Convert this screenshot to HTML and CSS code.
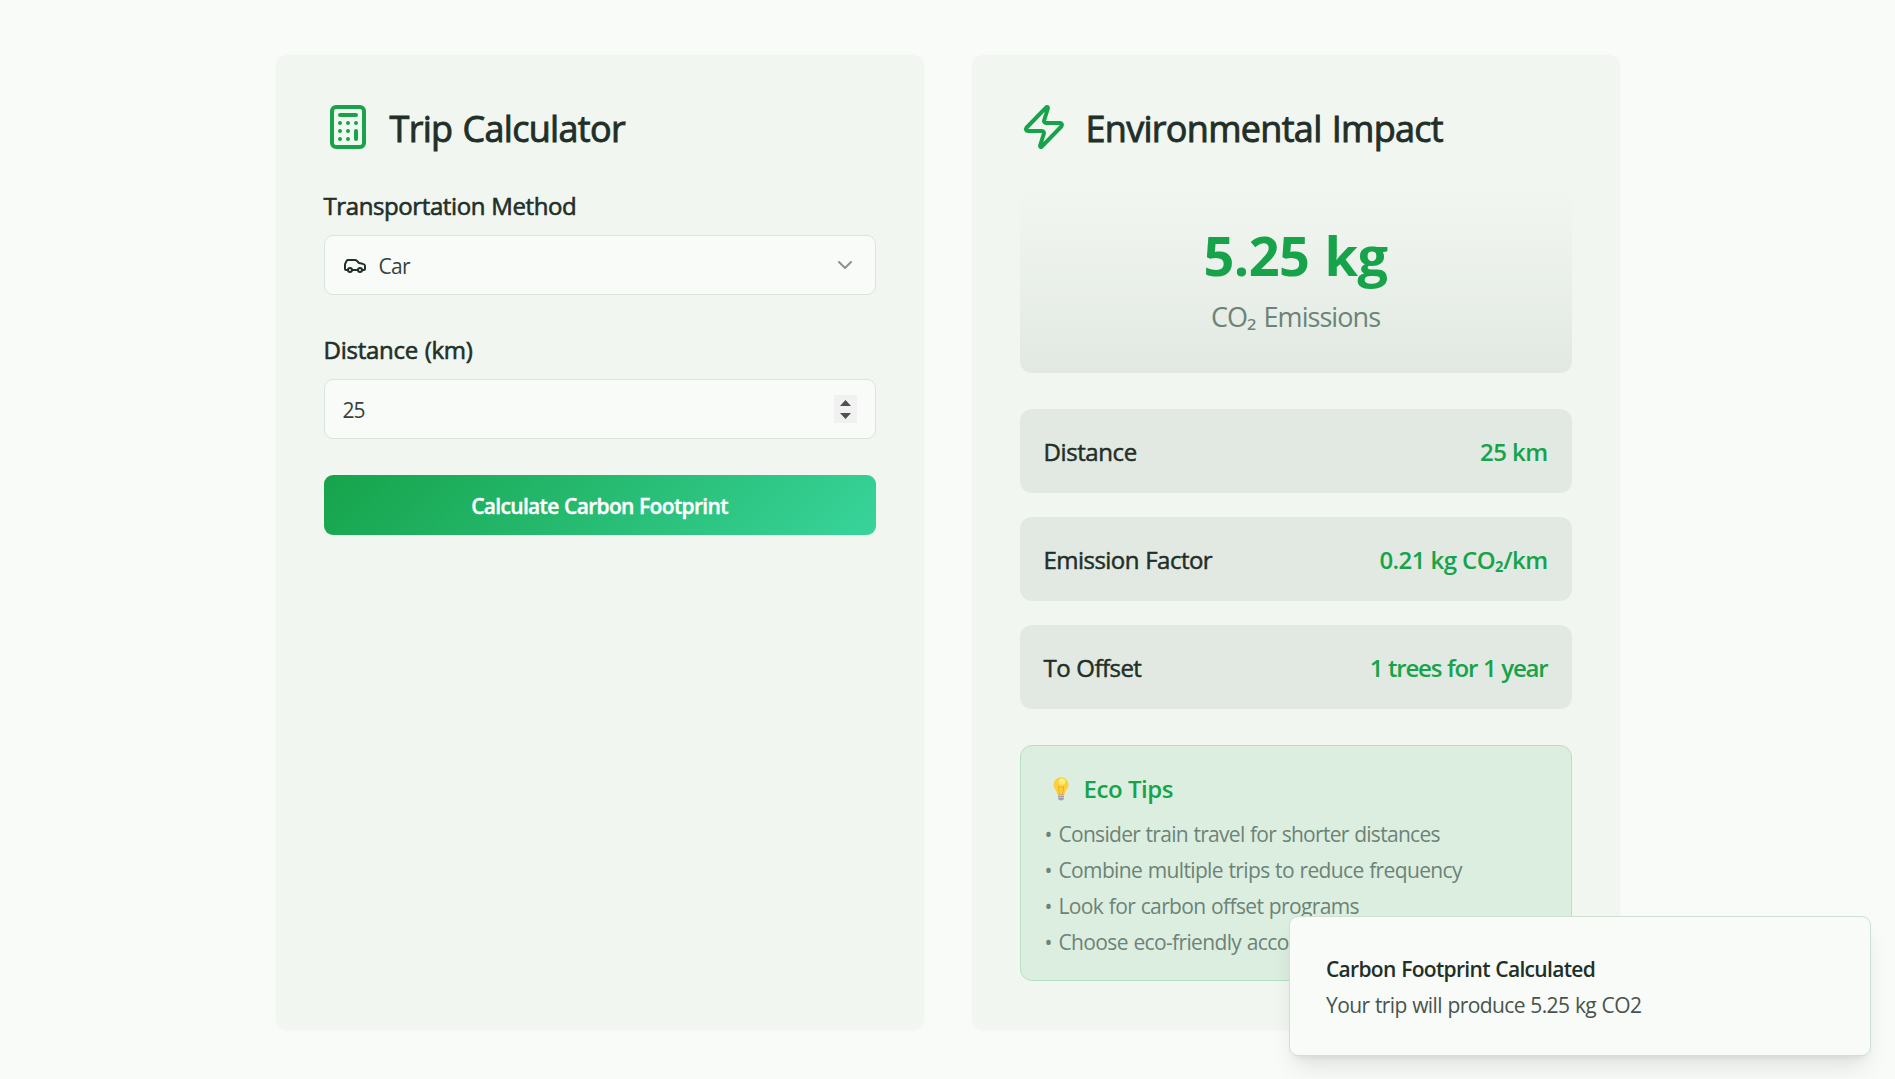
FILE: index.html
```html
<!DOCTYPE html>
<html lang="en">
<head>
<meta charset="utf-8">
<title>Carbon Footprint Calculator</title>
<link rel="stylesheet" href="styles.css">
</head>
<body>
<main class="grid">
  <section class="card">
    <header class="card-header">
      <svg class="header-icon" viewBox="0 0 24 24"><rect width="16" height="20" x="4" y="2" rx="2"/><path d="M8 6h8M16 14v4M16 10h.01M12 10h.01M8 10h.01M12 14h.01M8 14h.01M12 18h.01M8 18h.01"/></svg>
      <h2 class="title">Trip Calculator</h2>
    </header>
    <div class="field">
      <label class="label t-method">Transportation Method</label>
      <div class="control">
        <svg class="icon" viewBox="0 0 24 24"><path d="M19 17h2c.6 0 1-.4 1-1v-3c0-.9-.7-1.7-1.5-1.9C18.7 10.6 16 10 16 10s-1.3-1.4-2.2-2.3c-.5-.4-1.1-.7-1.8-.7H5c-.6 0-1.1.4-1.4.9l-1.4 2.9A3.7 3.7 0 0 0 2 12v4c0 .6.4 1 1 1h2"/><circle cx="7" cy="17" r="2"/><path d="M9 17h6"/><circle cx="17" cy="17" r="2"/></svg>
        <span class="value">Car</span>
        <svg class="icon chevron" viewBox="0 0 24 24"><path d="m6 9 6 6 6-6"/></svg>
      </div>
    </div>
    <div class="field">
      <label class="label t-km">Distance (km)</label>
      <div class="control">
        <span class="number">25</span>
        <svg class="spinner" viewBox="0 0 23 28"><path d="M6 11l5.500-6 5.500 6zM6 18h11l-5.500 6z"/></svg>
      </div>
    </div>
    <button class="button">Calculate Carbon Footprint</button>
  </section>

  <section class="card">
    <header class="card-header">
      <svg class="header-icon" viewBox="0 0 24 24"><path d="M4 14a1 1 0 0 1-.78-1.63l9.900-10.200a.5.5 0 0 1 .86.46l-1.920 6.020A1 1 0 0 0 13 10h7a1 1 0 0 1 .78 1.630l-9.900 10.200a.5.5 0 0 1-.86-.46l1.920-6.020A1 1 0 0 0 11 14z"/></svg>
      <h2 class="title">Environmental Impact</h2>
    </header>
    <div class="result">
      <div class="amount">5.25 kg</div>
      <div class="caption">CO₂ Emissions</div>
    </div>
    <div class="rows">
      <div class="row"><span class="t-distance">Distance</span><span class="green">25 km</span></div>
      <div class="row"><span class="t-factor">Emission Factor</span><span class="green">0.21 kg CO₂/km</span></div>
      <div class="row"><span class="t-offset">To Offset</span><span class="green t-trees">1 trees for 1 year</span></div>
    </div>
    <div class="tips">
      <h3 class="tips-title">
        <svg class="bulb" viewBox="0 0 16 24"><path d="M5 16h6v5.500q-.5 2-3 2t-3-2z" fill="#a39ba8"/><path d="M5 18.500h6M5 20.700h6" stroke="#d3d0d6" stroke-width=".8"/><path d="M8 .3a7.500 7.500 0 0 1 7.500 7.500c0 3.500-3.200 5.500-3.800 9.700H4.300C3.700 13.300.5 11.300.5 7.800A7.500 7.500 0 0 1 8 .3z" fill="#fcd03c"/><path d="M6.500 17 5.300 9.500l1.500 1L8 9.500l1.200 1 1.500-1L9.500 17" fill="none" stroke="#f5a623" stroke-width=".9"/><circle cx="9" cy="4.600" r="3.200" fill="#fff176"/></svg>
        <span>Eco Tips</span>
      </h3>
      <ul class="tips-list">
        <li><i>•</i><span class="t-tip1">Consider train travel for shorter distances</span></li>
        <li><i>•</i><span>Combine multiple trips to reduce frequency</span></li>
        <li><i>•</i><span>Look for carbon offset programs</span></li>
        <li><i>•</i><span>Choose eco-friendly accommodations</span></li>
      </ul>
    </div>
  </section>
</main>
<div class="toast">
  <div class="toast-title">Carbon Footprint Calculated</div>
  <div class="toast-text">Your trip will produce 5.25 kg CO2</div>
</div>
</body>
</html>
```
FILE: styles.css
```css
* { box-sizing: border-box; margin: 0; padding: 0; }
body {
  width: 1895px; height: 1079px; overflow: hidden;
  background: #f9fbf8; color: #222f28;
  font-family: "Open Sans", "Noto Sans", sans-serif;
}
.grid { display: grid; grid-template-columns: 648px 648px; gap: 48px; justify-content: center; padding-top: 55px; }
.card {
  height: 974px; padding: 48px; border-radius: 12px;
  background: #f2f6f1; box-shadow: 0 1px 3px rgba(40, 90, 60, .05);
}
.card-header { display: flex; gap: 18px; height: 48px; margin-bottom: 36px; }
.header-icon { width: 48px; height: 48px; }
svg { flex: none; display: block; }
.header-icon, .icon { fill: none; stroke: #16a34a; stroke-width: 2; stroke-linecap: round; stroke-linejoin: round; }
.icon { width: 24px; height: 24px; stroke: #222f28; }
.title { font-size: 36px; font-weight: 500; line-height: 52px; letter-spacing: -.7px; word-spacing: 1.5px; -webkit-text-stroke: .9px currentColor; }
.field { margin-bottom: 36px; }
.label {
  display: block; padding-top: 2px; margin-bottom: 12px;
  font-size: 24px; font-weight: 500; line-height: 34px; -webkit-text-stroke: .6px currentColor;
}
.t-method { letter-spacing: -.4px; word-spacing: .5px; }
.t-km { letter-spacing: -.25px; word-spacing: .7px; }
.control {
  display: flex; align-items: center; height: 60px; padding: 0 18px;
  border: 1px solid #dae4dc; border-radius: 9px; background: #f9fbf8; font-size: 21px;
}
.value { margin-left: 12px; padding-top: 2px; flex: 1; letter-spacing: -.7px; }
.number { flex: 1; padding-top: 2px; letter-spacing: -1px; }
.value, .number { color: #37433c; }
.chevron { opacity: .5; }
.spinner { width: 23px; height: 28px; background: #f1f1f1; fill: #505050; }
.button {
  width: 100%; height: 60px; padding-top: 2px; border: 0; border-radius: 9px; color: #fff;
  font: 600 21px "Open Sans", sans-serif; letter-spacing: -.68px; word-spacing: .6px; -webkit-text-stroke: .4px currentColor;
  background: linear-gradient(135deg, #16a34a, #38d49b);
}
.result {
  height: 186px; padding: 38px 36px 34px; border-radius: 12px; text-align: center;
  background: linear-gradient(180deg, #f2f6f1, #e2e9e2);
}
.amount { color: #16a34a; font-size: 54px; font-weight: 700; line-height: 60px; letter-spacing: -.6px; word-spacing: 2px; }
.caption { margin-top: 11px; color: #6c8377; font-size: 27px; line-height: 42px; letter-spacing: -.95px; word-spacing: 2px; }
.rows { display: grid; gap: 24px; margin: 36px 0; }
.row {
  display: flex; justify-content: space-between; padding: 25px 24px 23px; border-radius: 12px;
  background: #e2e9e2; font-size: 24px; font-weight: 500; line-height: 36px; -webkit-text-stroke: .5px currentColor;
}
.t-distance { letter-spacing: -.4px; }
.t-factor { letter-spacing: -.53px; word-spacing: .6px; }
.t-offset { letter-spacing: -.55px; word-spacing: .6px; }
.green { color: #16a34a; font-weight: 600; letter-spacing: -.57px; -webkit-text-stroke: 0; }
.t-trees { letter-spacing: -1.2px; word-spacing: .8px; }
.tips { height: 236px; padding: 25px 24px 23px; border: 1px solid #b3dfc5; border-radius: 12px; background: #dceee0; }
.tips-title {
  display: flex; align-items: center; height: 36px;
  color: #16a34a; font-size: 24px; font-weight: 600; line-height: 36px; letter-spacing: -.45px;
}
.bulb { width: 16px; height: 24px; margin: 0 15px 0 8px; }
.tips-list { display: grid; gap: 6px; margin-top: 12px; list-style: none; color: #6c8377; font-size: 21px; line-height: 30px; letter-spacing: -.64px; word-spacing: .75px; }
.t-tip1 { letter-spacing: -.71px; }
.tips-list li { display: flex; }
.tips-list i { width: 14px; font-style: normal; }
.toast {
  position: absolute; left: 1289px; top: 916px; width: 582px; height: 140px; padding: 37px 36px 33px;
  border: 1px solid #d0e0d5; border-radius: 9px; background: #f9fbf8;
  box-shadow: 0 15px 23px -5px rgba(0, 0, 0, .1), 0 6px 9px -6px rgba(0, 0, 0, .1);
}
.toast-title { font-size: 21px; font-weight: 600; line-height: 30px; letter-spacing: -.69px; word-spacing: .8px; }
.toast-text { margin-top: 6px; color: #48534d; font-size: 21px; line-height: 30px; letter-spacing: -.6px; word-spacing: .6px; }
```
